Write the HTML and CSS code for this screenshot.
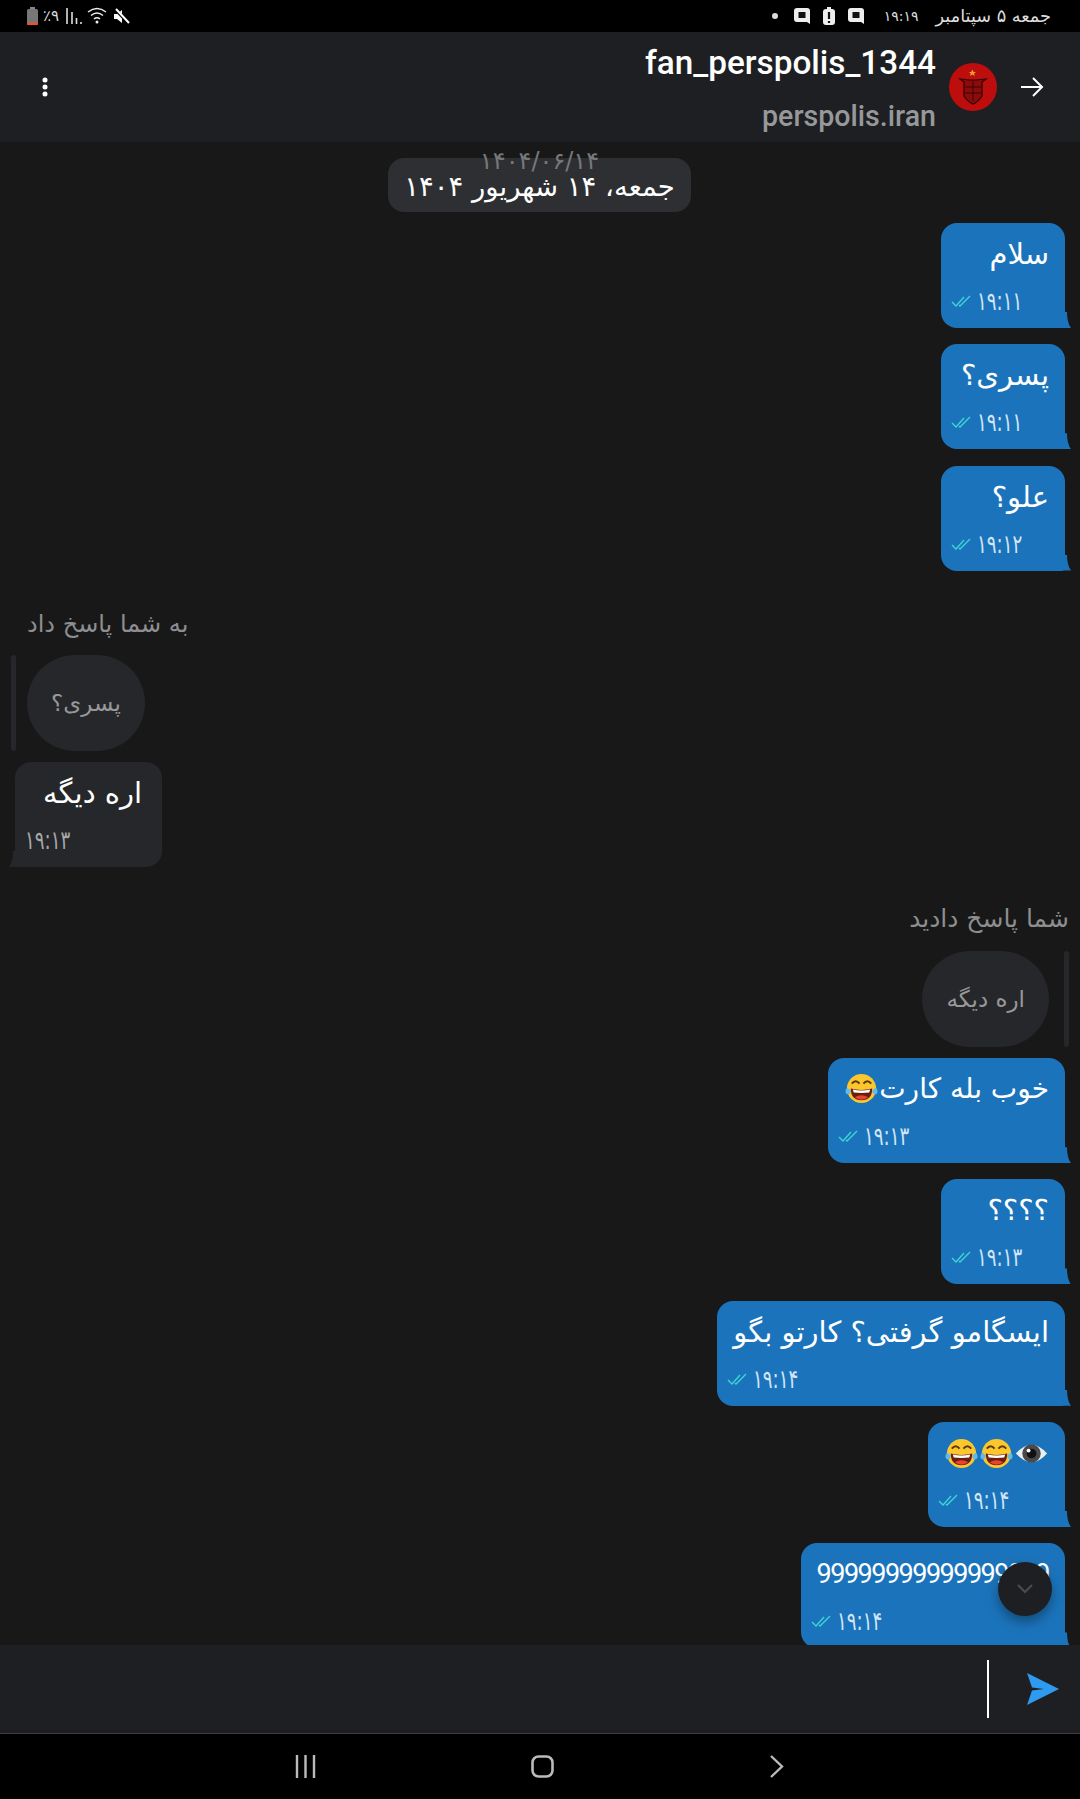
FILE: index.html
```html
<!DOCTYPE html>
<html lang="fa">
<head>
    <meta charset="UTF-8">
    <meta name="viewport" content="width=device-width, initial-scale=1.0">
    <title>fan_perspolis_1344</title>
    <link rel="stylesheet" href="styles.css">
</head>
<body>

<svg class="sprites" width="0" height="0">
    <symbol id="laugh" viewBox="0 0 36 36">
        <circle cx="18" cy="18" r="15" fill="#fcc72d"/>
        <path d="M8 13q4-5 8 0M20 13q4-5 8 0" fill="none" stroke="#5a3a12" stroke-width="2"/>
        <path d="M7 18q11 3 22 0q0 12-11 12T7 18z" fill="#6b1d12"/>
        <path d="M9 19q9 2 18 0l-1 3q-8 1-16 0z" fill="#fff"/>
        <path d="M11 27q7-4 14 0q-7 5-14 0z" fill="#e8452f"/>
        <path d="M3 17q-3 5 0 7q4 0 4-4zM33 17q3 5 0 7q-4 0-4-4z" fill="#63b9ea"/>
    </symbol>
    <symbol id="eye" viewBox="0 0 36 36">
        <path d="M2 18Q18 0 34 18Q18 36 2 18z" fill="#eceff1"/>
        <circle cx="18" cy="18" r="9.5" fill="#4a4a4a"/>
        <circle cx="18" cy="18" r="5" fill="#111"/>
        <circle cx="15" cy="15" r="2" fill="#fff"/>
    </symbol>
    <symbol id="ticks" viewBox="0 0 20 12">
        <path d="M1 7l4 4L13 2M8 10l1 1L19 1" fill="none" stroke="#3fd6d6" stroke-width="1.3"/>
    </symbol>
</svg>

<div class="statusbar">
    <div class="status-left">
        <svg width="11" height="18" viewBox="0 0 11 18"><rect x="3" y="0" width="5" height="2" fill="#888"/><rect y="2" width="11" height="16" rx="1.5" fill="#777"/><rect y="15" width="11" height="3" rx="1" fill="#d9573a"/></svg>
        <span class="status-text">٪۹</span>
        <svg class="signal" width="16" height="18" viewBox="0 0 16 18"><path d="M1 1v16M6 5v12M10.500 11v6M15 15v2" stroke="#ddd" stroke-width="1.600"/></svg>
        <svg width="21" height="18" viewBox="0 0 21 18"><path d="M1 5q9-7 18 0M4 8.500q6-5 12 0M7 12q3-2.500 6 0" fill="none" stroke="#eee" stroke-width="1.500"/><circle cx="10" cy="15" r="1.500" fill="#eee"/></svg>
        <svg width="17" height="17" viewBox="0 0 17 17"><path d="M1 6h3l5-4v13l-5-4H1z" fill="#fff"/><path d="M2 1l14 15" stroke="#000" stroke-width="3"/><path d="M3 1l13 14" stroke="#fff" stroke-width="2"/></svg>
    </div>
    <div class="status-right">
        <span class="dot"></span>
        <svg width="16" height="16" viewBox="0 0 16 16"><path d="M3 0h10a3 3 0 0 1 3 3v13l-3-2H3a3 3 0 0 1-3-3V3a3 3 0 0 1 3-3z" fill="#eee"/><rect x="4.500" y="4" width="7" height="6" fill="#111"/></svg>
        <svg width="12" height="18" viewBox="0 0 12 18"><rect y="2" width="12" height="16" rx="3" fill="#eee"/><rect x="4" width="4" height="3" fill="#eee"/><path d="M6 5v7M6 14v2" stroke="#111" stroke-width="2.200"/></svg>
        <svg width="16" height="16" viewBox="0 0 16 16"><path d="M3 0h10a3 3 0 0 1 3 3v13l-3-2H3a3 3 0 0 1-3-3V3a3 3 0 0 1 3-3z" fill="#eee"/><rect x="4.500" y="4" width="7" height="6" fill="#111"/></svg>
        <span class="status-text status-time">۱۹:۱۹</span>
        <span class="status-text status-date" dir="rtl">جمعه ۵ سپتامبر</span>
    </div>
</div>

<header class="topbar">
    <svg class="menu" width="6" height="20" viewBox="0 0 6 20"><circle cx="3" cy="3" r="2.500"/><circle cx="3" cy="10" r="2.500"/><circle cx="3" cy="17" r="2.500"/></svg>
    <div class="peer">
        <div class="peer-name">fan_perspolis_1344</div>
        <div class="peer-id">perspolis.iran</div>
    </div>
    <svg class="avatar" width="48" height="48" viewBox="0 0 48 48">
        <circle cx="24" cy="24" r="24" fill="#bd0d0d"/>
        <path d="M23 7l1.500 3h3l-2.500 2 1 3-3-2-3 2 1-3-2.500-2h3z" fill="#f3a02a" transform="translate(5 1) scale(.8)"/>
        <path d="M11 16l10 1h6l10-1-4 3v14q-4 6-9 8q-5-2-9-8V19z" fill="#8c0b0b" stroke="#2c0404" stroke-width="1.200"/>
        <path d="M16 24h16M16 30h16M24 18v20" stroke="#3a0606" stroke-width="1"/>
    </svg>
    <svg class="back" width="24" height="22" viewBox="0 0 24 22"><path d="M1 11h21M13 2l9 9-9 9" fill="none" stroke="#fff" stroke-width="2"/></svg>
</header>

<main class="chat">
    <div class="day">
        <div class="day-chip" dir="rtl">جمعه، ۱۴ شهریور ۱۴۰۴</div>
        <div class="day-date">۱۴۰۴/۰۶/۱۴</div>
    </div>

    <div class="msg out">
        <div class="msg-text" dir="rtl">سلام</div>
        <div class="msg-meta"><svg class="tick"><use href="#ticks"/></svg><span>۱۹:۱۱</span></div>
    </div>
    <div class="msg out">
        <div class="msg-text" dir="rtl">پسری؟</div>
        <div class="msg-meta"><svg class="tick"><use href="#ticks"/></svg><span>۱۹:۱۱</span></div>
    </div>
    <div class="msg out">
        <div class="msg-text" dir="rtl">علو؟</div>
        <div class="msg-meta"><svg class="tick"><use href="#ticks"/></svg><span>۱۹:۱۲</span></div>
    </div>

    <div class="reply reply-in">
        <div class="reply-label" dir="rtl">به شما پاسخ داد</div>
        <div class="reply-row">
            <div class="reply-bar"></div>
            <div class="reply-quote" dir="rtl">پسری؟</div>
        </div>
    </div>
    <div class="msg in">
        <div class="msg-text" dir="rtl">اره دیگه</div>
        <div class="msg-meta"><span>۱۹:۱۳</span></div>
    </div>

    <div class="reply reply-out">
        <div class="reply-label" dir="rtl">شما پاسخ دادید</div>
        <div class="reply-row">
            <div class="reply-quote" dir="rtl">اره دیگه</div>
            <div class="reply-bar"></div>
        </div>
    </div>
    <div class="msg out">
        <div class="msg-text msg-text-sm" dir="rtl">خوب بله کارت<svg class="emoji"><use href="#laugh"/></svg></div>
        <div class="msg-meta"><svg class="tick"><use href="#ticks"/></svg><span>۱۹:۱۳</span></div>
    </div>
    <div class="msg out">
        <div class="msg-text" dir="rtl">؟؟؟؟</div>
        <div class="msg-meta"><svg class="tick"><use href="#ticks"/></svg><span>۱۹:۱۳</span></div>
    </div>
    <div class="msg out">
        <div class="msg-text" dir="rtl">ایسگامو گرفتی؟ کارتو بگو</div>
        <div class="msg-meta"><svg class="tick"><use href="#ticks"/></svg><span>۱۹:۱۴</span></div>
    </div>
    <div class="msg out">
        <div class="msg-text emoji-row"><svg class="emoji"><use href="#laugh"/></svg><svg class="emoji"><use href="#laugh"/></svg><svg class="emoji"><use href="#eye"/></svg></div>
        <div class="msg-meta"><svg class="tick"><use href="#ticks"/></svg><span>۱۹:۱۴</span></div>
    </div>
    <div class="msg out">
        <div class="msg-text msg-num">99999999999999999</div>
        <div class="msg-meta"><svg class="tick"><use href="#ticks"/></svg><span>۱۹:۱۴</span></div>
    </div>

    <div class="fab">
        <svg width="18" height="10" viewBox="0 0 18 10"><path d="M2 1l7 7 7-7" fill="none" stroke="#4a4c50" stroke-width="2"/></svg>
    </div>
</main>

<footer class="composer">
    <div class="cursor"></div>
    <svg class="send" width="34" height="34" viewBox="0 0 34 34"><path d="M2 1L34 17 2 33 7 18.500 19 17 7 15.500z" fill="#2f9bf0"/></svg>
</footer>

<nav class="navbar">
    <svg width="21" height="23" viewBox="0 0 21 23"><path d="M2 0v23M10.500 0v23M19 0v23" stroke="#bbb" stroke-width="2.400"/></svg>
    <svg width="23" height="23" viewBox="0 0 23 23"><rect x="1.500" y="1.500" width="20" height="20" rx="6" fill="none" stroke="#bbb" stroke-width="2.600"/></svg>
    <svg width="15" height="23" viewBox="0 0 15 23"><path d="M2 1l11 10.500L2 22" fill="none" stroke="#bbb" stroke-width="2.400"/></svg>
</nav>

</body>
</html>
```

FILE: styles.css
```css
* {
    box-sizing: border-box;
}
html, body {
    height: 100%;
}
body {
    margin: 0;
    display: flex;
    flex-direction: column;
    height: 1799px;
    overflow: hidden;
    background: #181818;
    color: #fff;
    font-family: "DejaVu Sans", sans-serif;
}
.sprites {
    position: absolute;
}

/* status bar */
.statusbar {
    flex: 0 0 32px;
    background: #000;
    display: flex;
    justify-content: space-between;
    align-items: center;
    padding: 0 29px 0 27px;
}
.status-left, .status-right {
    display: flex;
    align-items: center;
}
.status-left {
    gap: 5px;
}
.signal {
    margin-left: 2px;
}
.status-right {
    gap: 13px;
}
.status-text {
    font-size: 15px;
    color: #ddd;
}
.status-time {
    margin-left: 7px;
    font-size: 14px;
}
.status-date {
    margin-left: 4px;
    font-size: 17.7px;
}
.dot {
    width: 6px;
    height: 6px;
    border-radius: 50%;
    background: #ddd;
    margin-right: 3px;
}

/* header */
.topbar {
    flex: 0 0 110px;
    background: #1e1f22;
    display: flex;
    align-items: center;
    padding: 0 36px 0 42px;
}
.menu {
    fill: #fff;
}
.peer {
    margin-left: auto;
    padding-top: 1px;
    text-align: right;
    font-family: Roboto, sans-serif;
}
.peer-name {
    font-size: 33.3px;
    font-weight: 500;
    line-height: 40px;
    margin-bottom: 17px;
}
.peer-id {
    font-size: 28.6px;
    font-weight: 500;
    line-height: 32px;
    color: #97989a;
}
.avatar {
    margin-left: 13px;
}
.back {
    margin-left: 23px;
}

/* chat area */
.chat {
    flex: 1;
    min-height: 0;
    position: relative;
    overflow: hidden;
    display: flex;
    flex-direction: column;
    align-items: flex-end;
    padding: 16px 15px 0;
}
.day {
    position: relative;
    align-self: center;
    margin-bottom: 11px;
    margin-right: 1px;
}
.day-chip {
    background: #2e2f32;
    border-radius: 16px;
    height: 54px;
    padding: 13px 16px 0;
    font-size: 27.5px;
    line-height: 30px;
    white-space: nowrap;
}
.day-date {
    position: absolute;
    top: -9px;
    left: 0;
    right: 0;
    text-align: center;
    font-size: 24px;
    line-height: 24px;
    color: #77787a;
}

/* messages */
.msg {
    position: relative;
    min-height: 105px;
    border-radius: 16px;
    padding: 11px 16px 0;
    margin-bottom: 16.3px;
}
.msg::after {
    content: "";
    position: absolute;
    bottom: 0;
    width: 10px;
    height: 16px;
    background: inherit;
}
.out {
    background: #1b74bb;
    border-bottom-right-radius: 4px;
}
.out::after {
    right: -6px;
    clip-path: path('M0 0L6 0C6 6 7 12 10 16L0 16Z');
}
.in {
    align-self: flex-start;
    background: #26272a;
    border-bottom-left-radius: 4px;
}
.in::after {
    left: -6px;
    clip-path: path('M10 0L4 0C4 6 3 12 0 16L10 16Z');
}
.msg-text {
    font-size: 29px;
    line-height: 40px;
    text-align: right;
    white-space: nowrap;
}
.msg-text-sm {
    font-size: 28px;
}
.in .msg-text {
    padding: 0 4px 0 12px;
}
.msg-num {
    font-family: Roboto, sans-serif;
    font-size: 27px;
    letter-spacing: -1.5px;
}
.emoji-row {
    display: flex;
    direction: ltr;
    justify-content: flex-end;
    height: 40px;
    align-items: center;
}
.emoji {
    width: 35px;
    height: 35px;
    vertical-align: -8px;
}
.msg-meta {
    display: flex;
    align-items: center;
    gap: 6px;
    margin: 12px 32px 0 -6px;
    font-size: 26px;
    line-height: 30px;
    color: #d4e6f5;
}
/* the digits of the reference are much narrower than any installed font */
.msg-meta span {
    width: 40px;
    white-space: nowrap;
    transform: scaleX(0.7);
    transform-origin: left center;
}
.in .msg-meta {
    color: #a8a9ab;
}
.tick {
    width: 20px;
    height: 12px;
}

/* reply headers */
.reply {
    display: flex;
    flex-direction: column;
    margin-top: 21px;
    margin-bottom: 11px;
    color: #8d8e90;
}
.reply-in {
    align-self: flex-start;
    align-items: flex-start;
    margin-left: -4px;
}
.reply-out {
    margin-top: 20px;
    align-items: flex-end;
    margin-right: -4px;
}
.reply-label {
    font-size: 24px;
    line-height: 32px;
    margin-bottom: 15px;
}
.reply-in .reply-label {
    margin-left: 16px;
}
.reply-out .reply-label {
    font-size: 25px;
    margin-bottom: 16px;
}
.reply-row {
    display: flex;
    gap: 11px;
}
.reply-out .reply-row {
    gap: 15px;
}
.reply-bar {
    width: 5px;
    height: 96px;
    border-radius: 3px;
    background: #26272a;
}
.reply-quote {
    height: 96px;
    border-radius: 48px;
    background: #26272a;
    padding: 0 24px;
    display: flex;
    align-items: center;
    font-size: 23px;
    color: #97989a;
    white-space: nowrap;
}

/* scroll button */
.fab {
    position: absolute;
    left: 998px;
    top: 1420px;
    width: 54px;
    height: 54px;
    border-radius: 50%;
    background: #1e1f22;
    box-shadow: 0 6px 12px rgba(0, 0, 0, 0.35);
    display: flex;
    align-items: center;
    justify-content: center;
}

/* composer */
.composer {
    flex: 0 0 89px;
    background: #1e1f22;
    border-bottom: 1px solid #3d3e40;
    display: flex;
    align-items: center;
    justify-content: flex-end;
    padding-right: 21px;
}
.cursor {
    width: 2px;
    height: 58px;
    background: #fff;
    margin-right: 36px;
}

/* nav bar */
.navbar {
    flex: 0 0 65px;
    background: #000;
    display: flex;
    align-items: center;
    padding: 0 296px 0 295px;
    justify-content: space-between;
}
```
